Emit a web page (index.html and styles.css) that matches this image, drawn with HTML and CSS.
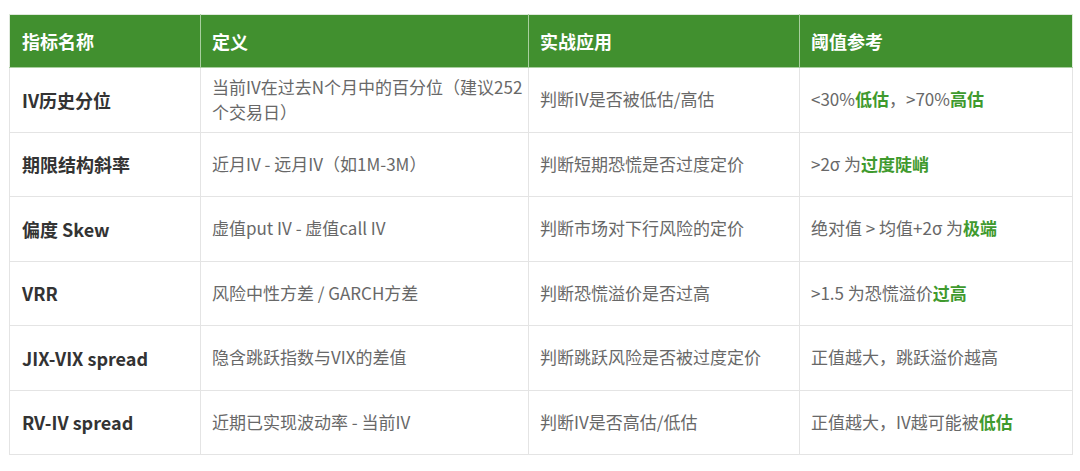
FILE: index.html
```html
<!DOCTYPE html>
<html lang="zh-CN">
<head>
<meta charset="utf-8">
<title>指标</title>
<link rel="stylesheet" href="styles.css">
</head>
<body>
<table class="tbl">
  <colgroup>
    <col class="c1"><col class="c2"><col class="c3"><col class="c4">
  </colgroup>
  <thead>
    <tr><th>指标名称</th><th>定义</th><th>实战应用</th><th>阈值参考</th></tr>
  </thead>
  <tbody>
    <tr>
      <td class="name">IV历史分位</td>
      <td class="keep">当前IV在过去N个月中的百分位（建议252<br>个交易日）</td>
      <td>判断IV是否被低估/高估</td>
      <td>&lt;30%<b class="hl">低估</b>，&gt;70%<b class="hl">高估</b></td>
    </tr>
    <tr>
      <td class="name">期限结构斜率</td>
      <td>近月IV - 远月IV（如1M-3M）</td>
      <td>判断短期恐慌是否过度定价</td>
      <td>&gt;2σ 为<b class="hl">过度陡峭</b></td>
    </tr>
    <tr>
      <td class="name">偏度 Skew</td>
      <td>虚值put IV - 虚值call IV</td>
      <td>判断市场对下行风险的定价</td>
      <td>绝对值 &gt; 均值+2σ 为<b class="hl">极端</b></td>
    </tr>
    <tr>
      <td class="name">VRR</td>
      <td>风险中性方差 / GARCH方差</td>
      <td>判断恐慌溢价是否过高</td>
      <td>&gt;1.5 为恐慌溢价<b class="hl">过高</b></td>
    </tr>
    <tr>
      <td class="name">JIX-VIX spread</td>
      <td>隐含跳跃指数与VIX的差值</td>
      <td>判断跳跃风险是否被过度定价</td>
      <td>正值越大，跳跃溢价越高</td>
    </tr>
    <tr>
      <td class="name">RV-IV spread</td>
      <td>近期已实现波动率 - 当前IV</td>
      <td>判断IV是否高估/低估</td>
      <td>正值越大，IV越可能被<b class="hl">低估</b></td>
    </tr>
  </tbody>
</table>
</body>
</html>
```

FILE: styles.css
```css
html, body {
  margin: 0;
  background: #ffffff;
}
body {
  padding: 14px 8px 0 9px;
  font-family: "Noto Sans CJK SC", "Noto Sans", sans-serif;
}
.tbl {
  border-collapse: collapse;
  width: 1063px;
  table-layout: fixed;
}
.c1 { width: 191px; }
.c2 { width: 328px; }
.c3 { width: 271px; }
.c4 { width: 273px; }

.tbl th {
  background: #41902f;
  color: #ffffff;
  font-size: 18px;
  font-weight: 700;
  text-align: left;
  height: 52px;
  padding: 0 11px;
  border: 1px solid #a9cf9f;
  border-top-color: #dfe9dc;
  vertical-align: middle;
}
.tbl th:first-child { border-left-color: #dfe9dc; padding-left: 12px; }
.tbl th:last-child { border-right-color: #dfe9dc; }

.tbl td {
  height: 63.5px;
  padding: 0 11px;
  border: 1px solid #e4e4e4;
  font-size: 17px;
  color: #686868;
  vertical-align: middle;
  line-height: 1.45;
}
.tbl td.keep {
  white-space: nowrap;
}
.tbl td.name {
  color: #333333;
  font-weight: 700;
  font-size: 18px;
  padding-left: 12px;
}
.hl {
  color: #3f9a2e;
  font-weight: 700;
}
```
